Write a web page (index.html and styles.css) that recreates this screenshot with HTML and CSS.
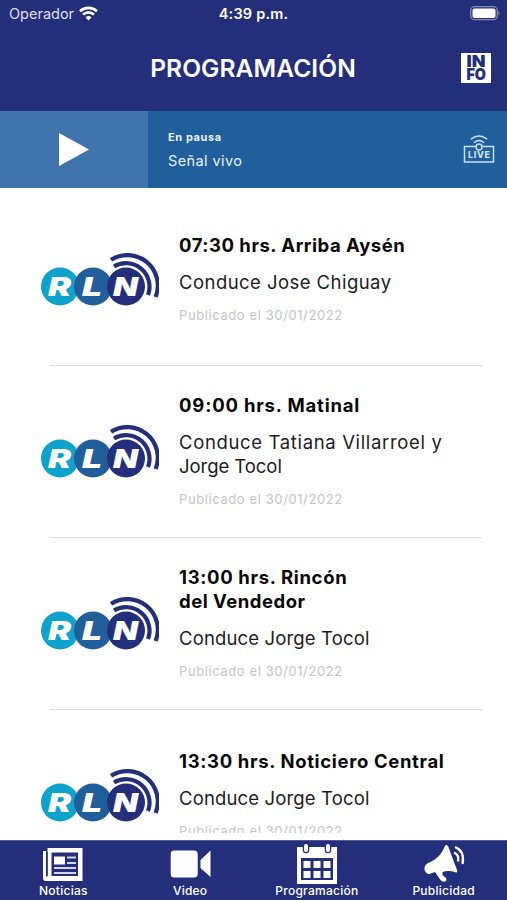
FILE: index.html
```html
<!DOCTYPE html>
<html lang="es">
<head>
<meta charset="utf-8">
<title>Programación</title>
<link rel="stylesheet" href="styles.css">
</head>
<body>
<svg width="0" height="0" class="defs">
  <symbol id="rln" viewBox="0 0 118 54">
    <circle cx="19" cy="33.500" r="19" fill="#0da3cd"/>
    <circle cx="52" cy="33.500" r="19" fill="#205f9c"/>
    <circle cx="85" cy="33.500" r="19" fill="#242f7b"/>
    <g fill="none" stroke="#242f7b" stroke-width="4.200">
      <path d="M70 6.800A30.500 30.500 0 0 1 114.600 44"/>
      <path d="M73 13.500A23.500 23.500 0 0 1 107 42"/>
    </g>
  </symbol>
</svg>
<div class="app">
  <header class="top">
    <div class="status">
      <span class="carrier"><span class="op">Operador</span>
        <svg width="19" height="15" viewBox="0 0 19 15" fill="none" stroke="#fff" stroke-width="2.600"><path d="M1 5.200a12.500 12.500 0 0 1 17 0M4 8.600a8 8 0 0 1 11 0"/><path d="M9.500 14.500L6.500 11.400a4.400 4.400 0 0 1 6 0z" fill="#fff" stroke="none"/></svg>
      </span>
      <span class="clock">4:39 p.m.</span>
      <svg class="battery" width="31" height="15" viewBox="0 0 31 15"><rect x=".7" y=".7" width="26.600" height="13" rx="4" fill="none" stroke="#858ab4" stroke-width="1.300"/><rect x="2.500" y="2.500" width="23" height="9.500" rx="2" fill="#fff"/><path d="M28.500 5q2 2.200 0 4.400z" fill="#858ab4"/></svg>
    </div>
    <div class="titlebar">
      <h1>PROGRAMACIÓN</h1>
      <svg class="info" width="30" height="30" viewBox="0 0 30 30"><rect width="30" height="30" fill="#fff"/><g fill="#242f7b" font-family="Inter, sans-serif" font-weight="900" font-size="15.500"><text x="5.500" y="14" textLength="19" lengthAdjust="spacingAndGlyphs">IN</text><text x="5.500" y="27" textLength="19.500" lengthAdjust="spacingAndGlyphs">FO</text></g></svg>
    </div>
  </header>
  <section class="player">
    <div class="play"><svg width="30" height="34" viewBox="0 0 30 34"><path d="M0 0L30 16.500L0 33z" fill="#fff"/></svg></div>
    <div class="now"><b>En pausa</b><span>Señal vivo</span></div>
    <svg class="live" width="32" height="29" viewBox="0 0 32 29" fill="none" stroke="#c9dff3" stroke-width="1.500"><path d="M12.500 11.500H1.500V27H30.500V11.500H19.500"/><circle cx="16" cy="12" r="3"/><path d="M8 4.200Q16-2.200 24 4.200M11 7.700Q16 3.400 21 7.700"/><text x="5" y="23.300" textLength="22" font-family="Inter, sans-serif" font-size="9" font-weight="800" fill="#c9dff3" stroke="none">LIVE</text></svg>
  </section>
  <main class="list">
    <article><svg class="logo"><use href="#rln"/><text x="7" y="42.800" textLength="23" lengthAdjust="spacingAndGlyphs">R</text><text x="41" y="42.800" textLength="20" lengthAdjust="spacingAndGlyphs">L</text><text x="72" y="42.800" textLength="25" lengthAdjust="spacingAndGlyphs">N</text></svg><div><h2 class="w-arriba">07:30 hrs. Arriba Aysén</h2><p class="w-jose">Conduce Jose Chiguay</p><time>Publicado el 30/01/2022</time></div></article>
    <article><svg class="logo"><use href="#rln"/><text x="7" y="42.800" textLength="23" lengthAdjust="spacingAndGlyphs">R</text><text x="41" y="42.800" textLength="20" lengthAdjust="spacingAndGlyphs">L</text><text x="72" y="42.800" textLength="25" lengthAdjust="spacingAndGlyphs">N</text></svg><div><h2 class="w-matinal">09:00 hrs. Matinal</h2><p><span class="w-tatiana">Conduce Tatiana Villarroel y</span><br><span class="w-tocol">Jorge Tocol</span></p><time>Publicado el 30/01/2022</time></div></article>
    <article><svg class="logo"><use href="#rln"/><text x="7" y="42.800" textLength="23" lengthAdjust="spacingAndGlyphs">R</text><text x="41" y="42.800" textLength="20" lengthAdjust="spacingAndGlyphs">L</text><text x="72" y="42.800" textLength="25" lengthAdjust="spacingAndGlyphs">N</text></svg><div><h2>13:00 hrs. Rincón<br><span class="w-vendedor">del Vendedor</span></h2><p>Conduce Jorge Tocol</p><time>Publicado el 30/01/2022</time></div></article>
    <article><svg class="logo"><use href="#rln"/><text x="7" y="42.800" textLength="23" lengthAdjust="spacingAndGlyphs">R</text><text x="41" y="42.800" textLength="20" lengthAdjust="spacingAndGlyphs">L</text><text x="72" y="42.800" textLength="25" lengthAdjust="spacingAndGlyphs">N</text></svg><div><h2>13:30 hrs. Noticiero Central</h2><p>Conduce Jorge Tocol</p><time>Publicado el 30/01/2022</time></div></article>
  </main>
  <nav>
    <a><svg width="40" height="40" viewBox="0 0 40 40"><path d="M4.500 4H39.500V37H3Q0 37 0 34V7H3V32.500H4.500z" fill="#fff"/><path d="M8.500 8.500H35V32H8.500z" fill="#242f7b"/><path d="M11 12.500h11v8H11z" fill="#fff"/><path d="M24 13.500h9M24 19h9M11 24h22M11 29h22" stroke="#d5d7e8" stroke-width="2.200"/><path d="M4.200 8v24" stroke="#242f7b"/></svg><span>Noticias</span></a>
    <a><svg width="40" height="40" viewBox="0 0 40 40" fill="#fff"><rect x=".7" y="6.500" width="27" height="27" rx="3.500"/><path d="M40.500 6.500V33L30.500 24V16z"/></svg><span>Video</span></a>
    <a><svg width="40" height="40" viewBox="0 0 40 40"><path d="M0 3H40V40H0z" fill="#fff"/><path d="M4 14H36V36H4z" fill="#242f7b"/><path d="M6.500 17h7v7h-7zM16.500 17h7v7h-7zM26.500 17h7v7h-7zM6.500 27h7v7h-7zM16.500 27h7v7h-7zM26.500 27h7v7h-7z" fill="#fff"/><path d="M9 2v4M31 2v4" stroke="#242f7b" stroke-width="6.500" stroke-linecap="round"/><path d="M9 2v4M31 2v4" stroke="#fff" stroke-width="4" stroke-linecap="round"/></svg><span>Programación</span></a>
    <a><svg width="40" height="40" viewBox="0 0 40 40"><path d="M21 2C18 9 14 15 4 19Q-1 22 1 27Q3 32 8 29L11 28L16.500 36Q19 39 22 37Q23 36 22 34L18.500 31V28Q25 26 32 28.500Q34 29 33 26L24 2Q22 0 21 2z" fill="#fff"/><path d="M30 8.500Q35.500 11 34 17.500M31 3Q41 7 38.500 20" fill="none" stroke="#fff" stroke-width="2.300"/></svg><span>Publicidad</span></a>
  </nav>
</div>
</body>
</html>
```
FILE: styles.css
```css
* { box-sizing: border-box; margin: 0; padding: 0; }
body { font-family: Inter, sans-serif; background: #fff; }
.defs { position: absolute; }
.app { height: 900px; display: flex; flex-direction: column; overflow: hidden; }
.top { height: 111px; background: #242f7b; color: #fff; }
.status { height: 27px; display: grid; grid-template-columns: 1fr auto 1fr; align-items: center; padding: 0 6px 0 9px; font-size: 14.500px; }
.carrier { display: flex; align-items: center; gap: 5px; color: #dcdeed; }
.carrier svg { margin-top: -1px; }
.op { letter-spacing: 0; }
.clock { font-weight: 600; letter-spacing: 0.2px; margin-left: -3px; }
.battery { justify-self: end; }
.titlebar { height: 84px; padding: 0 16px 0 46px; display: grid; grid-template-columns: 1fr 30px; align-items: center; }
h1 { font-size: 24.500px; font-weight: 600; line-height: 30px; text-align: center; margin: -2px 1px 0 0; letter-spacing: 0.1px; }
.info { margin-top: -2px; }
.player { height: 77px; display: flex; background: #205f9c; color: #fff; align-items: center; }
.play { width: 148px; height: 77px; background: #3f74ad; display: flex; align-items: center; justify-content: center; }
.now { flex: 1; padding-left: 20px; display: flex; flex-direction: column; color: #e6eff7; }
.now b { font-size: 11px; line-height: 16px; margin-bottom: 6px; letter-spacing: 0.6px; }
.now span { font-size: 14.500px; line-height: 20px; letter-spacing: 0.4px; }
.live { margin-right: 12px; }
.list { height: 645px; overflow: hidden; padding-top: 6px; flex: none; }
article { height: 172px; display: flex; align-items: center; gap: 20px; padding-left: 41px; background: linear-gradient(#dedede, #dedede) 50px 100% / 432px 1px no-repeat; }
article > div { margin-top: -2px; }
.logo { width: 118px; height: 54px; flex: none; fill: #fff; font-size: 25.500px; font-weight: 900; font-style: italic; }
h2 { font-size: 18.500px; line-height: 24px; font-weight: 700; color: #080808; margin-bottom: 13px; white-space: nowrap; letter-spacing: 0.65px; }
p { font-size: 18.500px; line-height: 24px; color: #1c1c1c; margin-bottom: 11px; white-space: nowrap; letter-spacing: 0.15px; }
.w-arriba { letter-spacing: 0.52px; }
.w-matinal { letter-spacing: 0.820px; }
.w-vendedor { letter-spacing: 0.5px; }
.w-jose { letter-spacing: 0.45px; }
.w-tatiana { letter-spacing: 0.65px; }
.w-tocol { letter-spacing: -0.050px; }
time { display: block; font-size: 13px; line-height: 20px; color: #c4c4c4; letter-spacing: 0.6px; }
nav { height: 60px; margin-top: auto; background: #242f7b; color: #fff; display: grid; grid-template-columns: repeat(4, 1fr); border-top: 1px solid #505990; }
nav a { display: flex; flex-direction: column; align-items: center; padding-top: 2px; }
nav svg { overflow: visible; margin-top: 1px; }
nav span { font-size: 12px; line-height: 14px; font-weight: 500; letter-spacing: 0.25px; }
```
